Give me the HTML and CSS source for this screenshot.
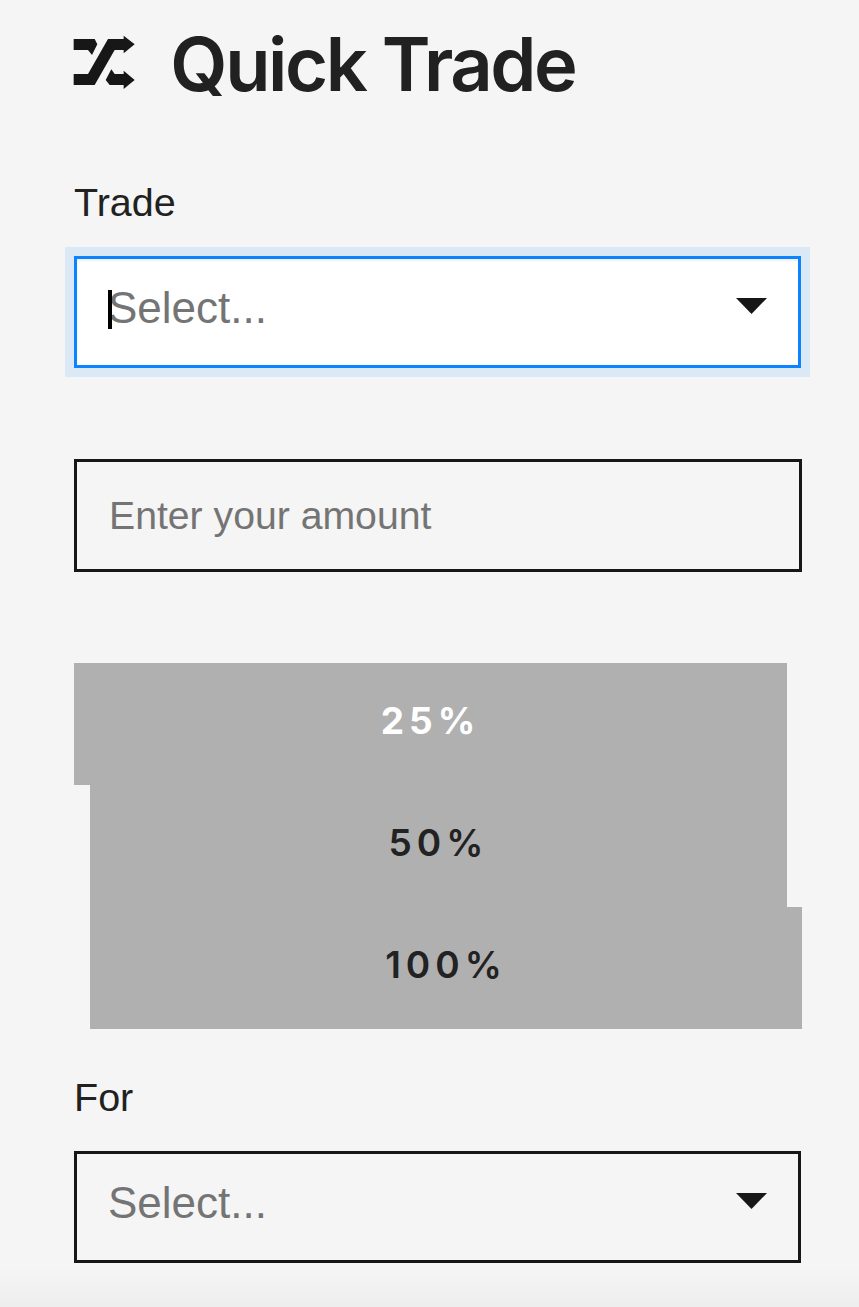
FILE: index.html
```html
<!DOCTYPE html>
<html lang="en">
<head>
<meta charset="utf-8">
<title>Quick Trade</title>
<link rel="stylesheet" href="styles.css">
</head>
<body>
<main class="panel">
  <header class="head">
    <svg class="head-icon" viewBox="40 40 190 165" width="63.33" height="55" aria-hidden="true">
      <path d="M42 52H105L113 68L97 100L85 85H42Z"/>
      <path d="M42 157H85L145 52H192V42L225 68L192 95V85H165L105 190H42Z"/>
      <path d="M155 143L165 157H192V147L225 175L192 202V190H150L138 175Z"/>
    </svg>
    <h1 class="title">Quick Trade</h1>
  </header>

  <label class="label label-trade">Trade</label>
  <div class="select select-focus">
    <span class="caret"></span>
    <span class="placeholder">Select...</span>
    <svg class="arrow" viewBox="0 0 31 16" width="31" height="16" aria-hidden="true"><path d="M0 0H31L15.5 16Z"/></svg>
  </div>

  <div class="amount"><span class="amount-text">Enter your amount</span></div>

  <div class="pcts">
    <div class="pct pct-a">25%</div>
    <div class="pct pct-b">50%</div>
    <div class="pct pct-c">100%</div>
  </div>

  <label class="label label-for">For</label>
  <div class="select">
    <span class="placeholder">Select...</span>
    <svg class="arrow" viewBox="0 0 31 16" width="31" height="16" aria-hidden="true"><path d="M0 0H31L15.5 16Z"/></svg>
  </div>
</main>
<div class="fade"></div>
</body>
</html>
```
FILE: styles.css
```css
* { box-sizing: border-box; }
html, body { margin: 0; height: 100%; }
body {
  background: #f5f5f5;
  color: #1c1c1c;
  font-family: "Liberation Sans", Arial, sans-serif;
  overflow: hidden;
  position: relative;
}
.panel {
  width: 728px;
  margin-left: 74px;
  padding-top: 22px;
}
.head {
  display: flex;
  align-items: center;
  gap: 34px;
  height: 84px;
}
.head-icon { fill: #171717; flex: none; margin-top: -3px; margin-left: -1px; }
.title {
  margin: 0;
  font-family: Inter, "Liberation Sans", sans-serif;
  font-size: 74px;
  font-weight: 600;
  letter-spacing: -2.4px;
  line-height: 84px;
  color: #212121;
  white-space: nowrap;
}
.label {
  display: block;
  font-size: 39.5px;
  line-height: 44px;
  color: #212121;
}
.label-trade { margin-top: 74px; margin-bottom: 32px; }
.label-for { margin-top: 46px; margin-bottom: 32px; }
.select {
  display: flex;
  align-items: center;
  position: relative;
  width: 727px;
  height: 112px;
  padding: 0 31px 0 31px;
  border: 3px solid #171717;
}
.select-focus {
  background: #fff;
  border-color: #0a84ff;
  box-shadow: 0 0 0 9px #dbe9f6, inset 0 2px 2px rgba(0, 0, 0, .06);
}
.caret {
  position: absolute;
  left: 31px;
  top: 31px;
  width: 4px;
  height: 39px;
  background: #000;
}
.placeholder {
  flex: 1;
  font-size: 44px;
  line-height: 48px;
  color: #747474;
  margin-bottom: 8px;
}
.arrow { fill: #171717; flex: none; margin-bottom: 12px; }
.amount {
  display: flex;
  align-items: center;
  width: 728px;
  height: 113px;
  margin-top: 91px;
  padding-left: 32px;
  border: 3px solid #171717;
}
.amount-text { font-size: 39.2px; line-height: 44px; color: #747474; }
.pcts {
  margin-top: 91px;
  display: flex;
  flex-direction: column;
}
.pct {
  display: flex;
  align-items: center;
  justify-content: center;
  height: 122px;
  padding-bottom: 7px;
  background: #b0b0b0;
  font-family: Inter, "Liberation Sans", sans-serif;
  font-size: 37px;
  font-weight: 600;
  letter-spacing: 5px;
  color: #222;
}
.pct-a { margin-right: 15px; color: #fff; font-weight: 700; }
.pct-b { margin-left: 16px; margin-right: 15px; }
.pct-c { margin-left: 16px; }
.fade {
  position: absolute;
  left: 0;
  right: 0;
  bottom: 0;
  height: 40px;
  background: linear-gradient(to bottom, rgba(0,0,0,0), rgba(0,0,0,.03));
}
```
